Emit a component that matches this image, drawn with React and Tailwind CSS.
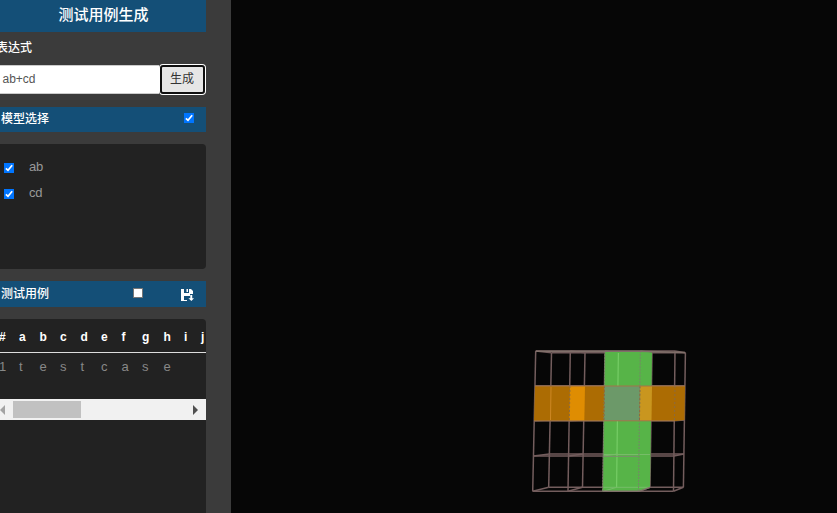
import React from "react";

const HEADERS = ["#", "a", "b", "c", "d", "e", "f", "g", "h", "i", "j"];
const CASE = ["1", "t", "e", "s", "t", "c", "a", "s", "e", "", ""];
const COLUMNS = "grid grid-cols-[20px_20.5px_20.5px_20.5px_20.5px_20.5px_20.5px_21.5px_20.5px_17px_8px]";

function Checked({ className = "" }) {
  return (
    <span className={`block h-[10px] w-[10px] shrink-0 bg-[#0075ff] ${className}`}>
      <svg viewBox="0 0 10 10" className="block h-[10px] w-[10px]">
        <path d="M1.9 5.3 4 7.3 8.2 2.3" fill="none" stroke="#fff" strokeWidth="1.7" />
      </svg>
    </span>
  );
}

function Sidebar() {
  return (
    <aside className="h-[513px] w-[231px] shrink-0 overflow-hidden bg-[#3b3b3b]">
      <div className="flex w-[206px] flex-col">
        <h1 className="flex h-8 items-center justify-center bg-[#144f77] pb-[3px] pl-px text-[15px] font-medium leading-none text-white">测试用例生成</h1>
        <label className="-ml-1 mt-[9px] block h-[23px] text-[12px] font-medium leading-[14px] text-white">表达式</label>
        <div className="flex h-[31px] w-[206px] items-center">
          <div className="flex h-[29px] flex-1 items-center border-y border-[#ccc] bg-white pb-px pl-[2.5px] text-[12px] text-[#555]">ab+cd</div>
          <div className="h-[31px] w-[47px] rounded-[4px] bg-white p-px">
            <button className="flex h-[29px] w-[45px] items-center justify-center rounded-[3px] border-2 border-[#101010] bg-[#e6e6e6] pb-px pr-px text-[12px] leading-none text-[#333]">生成</button>
          </div>
        </div>
        <div className="mt-3 flex h-[25px] items-center justify-between bg-[#144f77] pb-[3px] pl-px pr-3 text-[12px] font-medium text-white">
          <span className="pt-[2px]">模型选择</span>
          <Checked />
        </div>
        <div className="mt-3 h-[125px] rounded-r-[4px] bg-[#222] pl-1 pt-[10px] text-[12px] text-[#999]">
          {["ab", "cd"].map((name) => (
            <div key={name} className="flex h-[26px] items-center">
              <Checked className="mt-px" />
              <span className="ml-[15px] text-[13px] tracking-[-0.2px]">{name}</span>
            </div>
          ))}
        </div>
        <div className="mt-3 flex h-[26px] items-center bg-[#144f77] pb-[2px] pl-px text-[12px] font-medium text-white">
          <span className="w-[132px] pt-px">测试用例</span>
          <span className="block h-[10px] w-[10px] border border-[#767676] bg-white" />
          <svg viewBox="0 0 14 14" className="ml-[38px] mt-[3px] block h-[14px] w-[14px]" fill="#fff">
            <path d="M0 1h3v4h5V1h2l2 2v3H9v2H3v4h3v1H0z" />
            <path d="M5.5 1H7v3H5.5zM9.3 7h1.9v3.2H13L10.4 13l-3-2.8h1.9z" />
          </svg>
        </div>
        <div className="mt-3 h-[194px] overflow-hidden rounded-tr-[4px] bg-[#222]">
          <div className="w-[206px] overflow-hidden border-b border-[#ddd]">
            <div className={`${COLUMNS} -ml-px h-[33px] items-center pt-[2px] text-[12px] font-bold text-white`}>
              {HEADERS.map((text, i) => (
                <span key={i}>{text}</span>
              ))}
            </div>
          </div>
          <div className={`${COLUMNS} -ml-px h-[27px] items-center text-[13px] text-[#888]`}>
            {CASE.map((text, i) => (
              <span key={i}>{text}</span>
            ))}
          </div>
          <div className="mt-[19px] flex h-[21px] items-center justify-between bg-[#f1f1f1]">
            <svg viewBox="0 0 5 10" className="h-[10px] w-[5px]"><path d="M5 0v10L0 5z" fill="#a3a3a3" /></svg>
            <div className="ml-2 h-[17px] w-[68px] bg-[#c1c1c1]" />
            <svg viewBox="0 0 5 10" className="ml-auto mr-2 h-[10px] w-[5px]"><path d="M0 0v10l5-5z" fill="#505050" /></svg>
          </div>
        </div>
        <div className="h-4 bg-[#222]" />
      </div>
    </aside>
  );
}

const FRONT = [[535.7, 532.7], [570.3, 568], [605, 602.8], [640.3, 638.5], [675, 673.5]];
const BACK = [[551.5, 548.7], [585, 582.5], [618.4, 616.6], [652, 650], [685.4, 683.4]];
const FRONT_Y = [351, 386, 420.7, 456, 491.3];
const BACK_Y = [352.7, 386, 420, 454, 487.3];

function Scene() {
  const at = ([top, bottom], t) => top + (bottom - top) * t;
  const links = [];
  for (let c = 0; c < 5; c++) {
    for (let r = 0; r < 5; r++) {
      links.push([at(FRONT[c], r / 4), FRONT_Y[r], at(BACK[c], r / 4), BACK_Y[r]]);
    }
  }
  return (
    <main className="h-[513px] flex-1 bg-[#060606]">
      <svg viewBox="231 0 606 513" className="block h-[513px] w-[606px]" fill="none">
        <g stroke="#735d5d" strokeWidth="1.5">
          {FRONT.map(([a, b], i) => <path key={i} d={`M${a} 351 ${b} 491.3`} />)}
          {BACK.map(([a, b], i) => <path key={i} d={`M${a} 352.7 ${b} 487.3`} />)}
          {FRONT_Y.map((y, i) => <path key={i} d={`M${at(FRONT[0], i / 4)} ${y} ${at(FRONT[4], i / 4)} ${y}`} />)}
          {BACK_Y.map((y, i) => <path key={i} d={`M${at(BACK[0], i / 4)} ${y} ${at(BACK[4], i / 4)} ${y}`} />)}
          {links.map(([x1, y1, x2, y2], i) => <path key={i} d={`M${x1} ${y1} ${x2} ${y2}`} />)}
        </g>
        <path d="M605 351h35.3l11.7 1.5-2 134.8-11.5 4h-35.7z" fill="#57b448" />
        <path d="M535 386h150l-.5 34-9.5 1H534z" fill="#ac6c03" />
        <path d="M570 386h15l-.7 35h-15z" fill="#df8d02" />
        <path d="M604.5 386H640l-.5 35h-35.5z" fill="#6c9969" />
        <path d="M640 386h12l-.5 35h-12z" fill="#c9961f" />
        <path d="M618.4 353 617.9 386M617.4 421l-.8 66" stroke="#76cd66" strokeWidth="1.2" />
        <path d="M603 454.5h47M603 487.3h47M602.8 491.3l14-4M603.4 456l14-2" stroke="#76bd68" />
        <path d="M603 456.3h36" stroke="#7f8a70" />
        <path d="M605 351 602.8 491M640.3 351l-1.8 140" stroke="#748866" strokeDasharray="2 1" />
        <path d="M570 386l-.7 35M604.5 386l-.5 35M640 386l-.5 35M675 386l-.5 35" stroke="#8b6a42" strokeDasharray="2 2" />
        <path d="M535 386h150M534 420.8h141" stroke="#a2754b" />
        <path d="M551 387l-.5 33" stroke="#ce8824" />
        <path d="M536 351.3h104l45 1.2M603 491.3h36l11-4" stroke="#80706a" strokeWidth="1.4" />
      </svg>
    </main>
  );
}

export default function App() {
  return (
    <div className="flex h-[513px] w-[837px] overflow-hidden bg-[#060606] font-['Liberation_Sans','Noto_Sans_CJK_SC',sans-serif]">
      <Sidebar />
      <Scene />
    </div>
  );
}
